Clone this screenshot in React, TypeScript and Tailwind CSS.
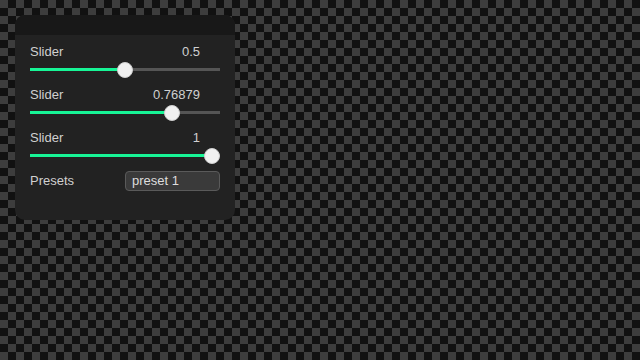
const sliders = [
  { id: "a", label: "Slider", value: 0.5, text: "0.5" },
  { id: "b", label: "Slider", value: 0.76879, text: "0.76879" },
  { id: "c", label: "Slider", value: 1, text: "1" },
];

function SliderRow({ label, value, text }: { label: string; value: number; text: string }) {
  const pos = 8 + value * 174;
  return (
    <div className="flex flex-col">
      <div className="flex h-[16px] items-center justify-between pr-5 text-[13px] leading-[16px] text-[#d0d0d0]">
        <span>{label}</span>
        <span>{text}</span>
      </div>
      <div className="relative h-[18px]">
        <div className="absolute left-0 right-0 top-[8px] h-[3px] bg-[#555555]" />
        <div
          className="absolute left-0 top-[8px] h-[3px] bg-[#17f596]"
          style={{ width: pos }}
        />
        <div
          className="absolute top-[1.5px] h-4 w-4 -translate-x-1/2 rounded-full border border-[#cfcfcf] bg-[#f0f0f0]"
          style={{ left: pos }}
        />
      </div>
    </div>
  );
}

export default function App() {
  return (
    <div
      className="h-[360px] w-[640px] bg-[repeating-conic-gradient(#111111_0_25%,#3d3d3d_0_50%)] bg-[length:16px_16px] p-[15px]"
      style={{ fontFamily: '"Liberation Sans", Arial, sans-serif' }}
    >
      <div className="w-[220px] overflow-hidden rounded-[10px] bg-[#222222]">
        <div className="h-[20px] bg-[#181818]" />
        <div className="flex flex-col px-[15px] pb-[29px] pt-[9px]">
          <div className="flex flex-col gap-[9px]">
            {sliders.map((s) => (
              <SliderRow key={s.id} label={s.label} value={s.value} text={s.text} />
            ))}
          </div>
          <div className="mt-[7px] flex h-[20px] items-center justify-between text-[13px] text-[#d0d0d0]">
            <span>Presets</span>
            <div className="flex h-[20px] w-[95px] items-center rounded-[4px] border border-[#5a5a5a] bg-[#3a3a3a] px-[6px] text-[#dddddd]">
              preset 1
            </div>
          </div>
        </div>
      </div>
    </div>
  );
}
